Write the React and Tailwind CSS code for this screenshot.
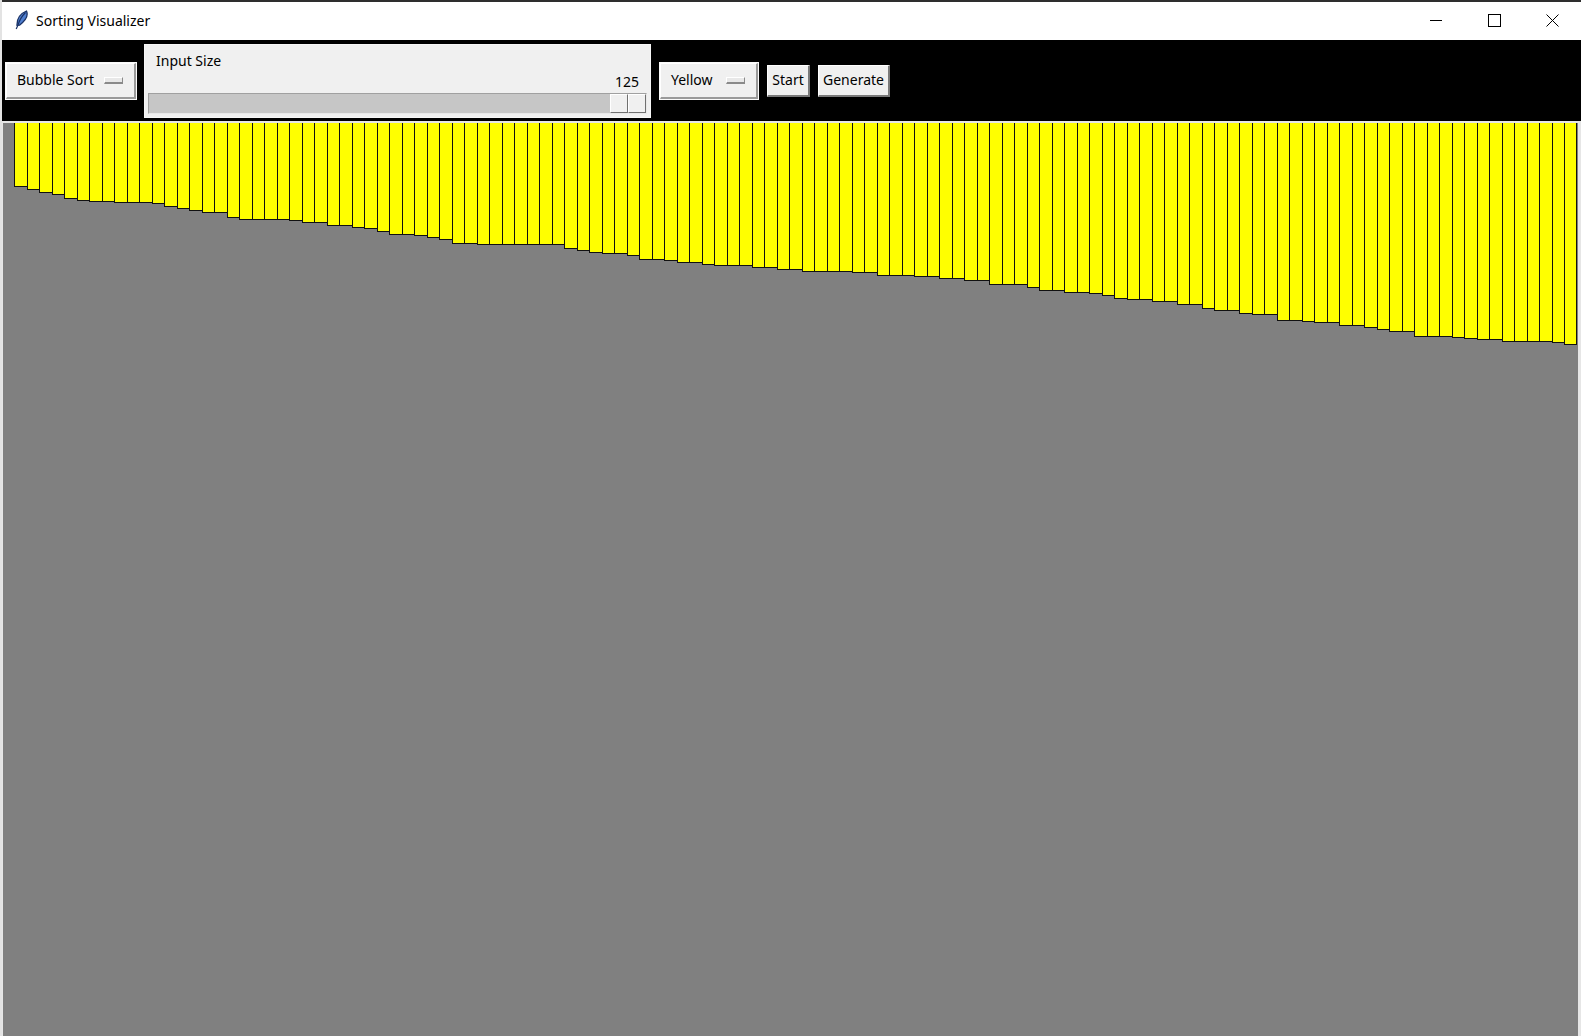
import React from "react";

const segs = [[1,185],[1,188],[1,191],[1,193],[1,197],[1,199],[2,200],[3,201],[1,202],[1,205],[1,207],[1,209],[2,211],[1,216],[4,218],[1,219],[2,221],[2,224],[1,226],[1,227],[1,230],[2,233],[1,234],[1,236],[1,238],[2,242],[7,243],[1,247],[1,249],[1,251],[2,252],[1,254],[2,258],[1,259],[2,261],[1,263],[3,264],[2,266],[2,268],[4,270],[2,271],[3,274],[2,275],[2,277],[2,279],[3,283],[1,286],[2,289],[2,291],[1,292],[1,294],[1,297],[2,298],[2,300],[2,302],[1,306],[2,308],[1,311],[2,312],[2,318],[1,319],[2,320],[2,323],[1,325],[1,327],[2,329],[3,334],[1,335],[1,336],[2,337],[4,339],[1,340],[1,342]];

const heights = [];
segs.forEach(([n, y]) => {
  for (let i = 0; i < n; i++) heights.push(Math.round(y * 1.0083) - 123);
});

const font = { fontFamily: '"Noto Sans", "Open Sans", sans-serif' };

function Indicator() {
  return (
    <div className="w-[19px] h-[7px] bg-[#e8e8e8] border-t border-l border-white border-b-2 border-r border-b-[#8a8a8a] border-r-[#8a8a8a]" />
  );
}

function MenuButton({ label, width }) {
  return (
    <div className={`${width} h-[38px] border border-[#fafafa] bg-[#f0f0f0]`}>
      <div className="h-full w-full flex items-center justify-between pl-[10px] pr-[11px] border-b-2 border-r-2 border-b-[#9a9a9a] border-r-[#9a9a9a] border-t border-l border-t-white border-l-white">
        <span className="text-[14px] text-black leading-none">{label}</span>
        <Indicator />
      </div>
    </div>
  );
}

function Button({ label, width }) {
  return (
    <div className={`${width} h-[32px] bg-[#f0f0f0] border-t border-l border-white border-b-2 border-r-2 border-b-[#7a7a7a] border-r-[#7a7a7a] flex items-center justify-center`}>
      <span className="text-[14px] text-black leading-none">{label}</span>
    </div>
  );
}

export default function App() {
  return (
    <div className="w-[1581px] h-[1036px] flex flex-col bg-white overflow-hidden border-l-2 border-[#e3e3e3]" style={font}>
      {/* Title bar */}
      <div className="h-[40px] shrink-0 bg-white border-t-2 border-[#2e2e2e] flex items-center justify-between pb-[2px]">
        <div className="flex items-center pl-[10px]">
          <svg width="18" height="20" viewBox="0 0 18 20">
            <path d="M14.5 1 C16.5 5.5 13 11 7.5 15.2 L5 15.4 C4.8 9 8.5 3.5 14.5 1 Z" fill="#4f7fd0" stroke="#1a3266" strokeWidth="1.3" />
            <path d="M13.5 2.5 C10 6 7.5 10 6 15 L4.2 19" fill="none" stroke="#1a3266" strokeWidth="1.2" />
          </svg>
          <span className="ml-[6px] text-[14px] text-black">Sorting Visualizer</span>
        </div>
        <div className="flex items-center h-full">
          <div className="w-[58px] h-full flex items-center justify-center">
            <svg width="12" height="12" viewBox="0 0 12 12"><path d="M0 6.5 H12" stroke="#000" strokeWidth="1" /></svg>
          </div>
          <div className="w-[58px] h-full flex items-center justify-center">
            <svg width="13" height="13" viewBox="0 0 13 13"><rect x="0.5" y="0.5" width="12" height="12" fill="none" stroke="#000" strokeWidth="1" /></svg>
          </div>
          <div className="w-[58px] h-full flex items-center justify-center">
            <svg width="13" height="13" viewBox="0 0 13 13"><path d="M0.5 0.5 L12.5 12.5 M12.5 0.5 L0.5 12.5" stroke="#000" strokeWidth="1" /></svg>
          </div>
        </div>
      </div>

      {/* Toolbar */}
      <div className="h-[81px] shrink-0 bg-black flex items-center pl-[3px]">
        <MenuButton label="Bubble Sort" width="w-[132px]" />
        <div className="ml-[7px] mt-[1px] w-[507px] h-[74px] bg-[#f0f0f0] border border-[#f7f7f7] flex flex-col pt-[6px] pb-[2px]">
          <div className="h-[19px] pl-[11px] text-[14px] leading-[19px] text-black">Input Size</div>
          <div className="mt-[2px] h-[19px] flex justify-end pr-[11px] text-[14px] leading-[19px] text-black">125</div>
          <div className="mt-[2px] h-[21px] ml-[3px] mr-[3px] bg-[#c6c6c6] border-t border-l border-[#a0a0a0] border-b border-r border-b-[#e8e8e8] border-r-[#e8e8e8] flex justify-end">
            <div className="w-[36px] h-full flex">
              <div className="flex-1 bg-[#f0f0f0] border-t border-l border-white border-b border-r border-b-[#707070] border-r-[#707070]" />
              <div className="flex-1 bg-[#f0f0f0] border-t border-l border-white border-b border-r border-b-[#707070] border-r-[#707070]" />
            </div>
          </div>
        </div>
        <div className="ml-[8px]">
          <MenuButton label="Yellow" width="w-[100px]" />
        </div>
        <div className="ml-[8px]">
          <Button label="Start" width="w-[43px]" />
        </div>
        <div className="ml-[8px]">
          <Button label="Generate" width="w-[72px]" />
        </div>
      </div>

      {/* Canvas */}
      <div className="flex-1 bg-[#808080] border-t-2 border-l border-r-[3px] border-[#e6e6e6] pl-[11px] flex items-start">
        {heights.map((h, i) => (
          <div
            key={i}
            className={`w-[12.5px] shrink-0 bg-[#ffff00] border-l border-b border-[#111111] ${i === heights.length - 1 ? "border-r" : ""}`}
            style={{ height: `${h}px` }}
          />
        ))}
      </div>
    </div>
  );
}
